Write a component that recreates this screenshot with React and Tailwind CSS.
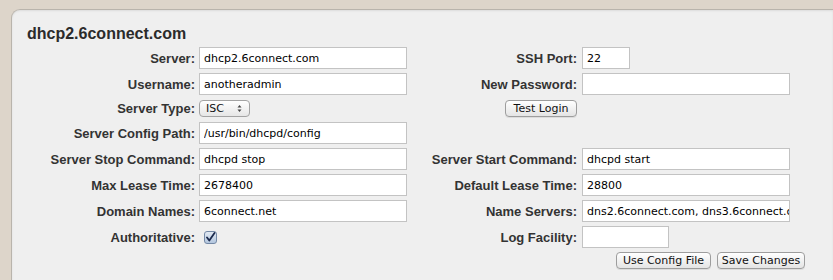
import React from "react"

const labelCls =
  "text-right text-[13px] font-bold text-[#333] leading-none font-['Liberation_Sans',Arial,sans-serif] whitespace-nowrap"
const inputCls =
  "h-[22px] border border-[#c3c3c3] bg-white pl-[4px] text-[11px] text-black font-['DejaVu_Sans',Verdana,sans-serif] outline-none"
const btnCls =
  "h-[17px] rounded-[4px] border border-[#9d9d9d] bg-gradient-to-b from-white to-[#e4e4e4] text-[11px] font-normal leading-none text-[#111] font-['DejaVu_Sans',Verdana,sans-serif] shadow-[0_1px_0_rgba(0,0,0,0.08)]"

function Field({ value, w = "w-[208px]" }) {
  return <input type="text" readOnly value={value} className={`${inputCls} ${w}`} />
}

function Row({ h = "h-[22px]", leftLabel, left, rightLabel, right }) {
  return (
    <div className={`flex items-center ${h}`}>
      <div className={`w-[168px] ${labelCls}`}>{leftLabel}</div>
      <div className="ml-[4px] flex w-[208px] items-center">{left}</div>
      <div className={`w-[170px] ${labelCls}`}>{rightLabel}</div>
      <div className="ml-[5px] flex items-center">{right}</div>
    </div>
  )
}

function Checkbox() {
  return (
    <div className="ml-[5px] flex h-[13px] w-[13px] items-center justify-center rounded-[3px] border border-[#7489a6] bg-gradient-to-b from-[#e2e9f2] to-[#b3c6de]">
      <svg width="11" height="11" viewBox="0 0 11 11">
        <path d="M2 5.5 L4.3 8.5 L9.5 1" fill="none" stroke="#1c2a4d" strokeWidth="1.8" strokeLinecap="round" strokeLinejoin="round" />
      </svg>
    </div>
  )
}

function Select() {
  return (
    <div className="flex h-[17px] w-[51px] items-center justify-between rounded-[4px] border border-[#a3a3a3] bg-gradient-to-b from-white to-[#e6e6e6] pl-[6px] pr-[7px] text-[11px] leading-none text-[#111] font-['DejaVu_Sans',Verdana,sans-serif]">
      <span>ISC</span>
      <svg width="5" height="9" viewBox="0 0 5 9">
        <path d="M0.5 3.5 L2.5 1 L4.5 3.5 Z" fill="#444" />
        <path d="M0.5 5.5 L2.5 8 L4.5 5.5 Z" fill="#444" />
      </svg>
    </div>
  )
}

export default function App() {
  return (
    <div className="h-[280px] overflow-hidden bg-[#ddd5ca] pl-[11px] pt-[9px]">
      <div className="h-[300px] rounded-tl-[9px] border-l border-t border-[#b9b4ac] bg-[#efefef] pl-[15px] pt-[14px] shadow-[inset_0_1px_2px_rgba(0,0,0,0.08)]">
        <h1 className="h-[20px] text-[16px] font-bold leading-[20px] text-[#2b2b2b] font-['Liberation_Sans',Arial,sans-serif]">
          dhcp2.6connect.com
        </h1>

        <div className="mt-[3px] flex flex-col gap-[4px]">
          <Row
            leftLabel="Server:"
            left={<Field value="dhcp2.6connect.com" />}
            rightLabel="SSH Port:"
            right={<Field value="22" w="w-[48px]" />}
          />
          <Row
            leftLabel="Username:"
            left={<Field value="anotheradmin" />}
            rightLabel="New Password:"
            right={<Field value="" />}
          />
          <Row
            h="h-[19px]"
            leftLabel="Server Type:"
            left={<Select />}
            rightLabel={
              <div className="flex justify-end">
                <button className={`${btnCls} w-[72px]`}>Test Login</button>
              </div>
            }
            right={null}
          />
          <Row
            leftLabel="Server Config Path:"
            left={<Field value="/usr/bin/dhcpd/config" />}
            rightLabel=""
            right={null}
          />
          <Row
            leftLabel="Server Stop Command:"
            left={<Field value="dhcpd stop" />}
            rightLabel="Server Start Command:"
            right={<Field value="dhcpd start" />}
          />
          <Row
            leftLabel="Max Lease Time:"
            left={<Field value="2678400" />}
            rightLabel="Default Lease Time:"
            right={<Field value="28800" />}
          />
          <Row
            leftLabel="Domain Names:"
            left={<Field value="6connect.net" />}
            rightLabel="Name Servers:"
            right={<Field value="dns2.6connect.com, dns3.6connect.com" />}
          />
          <Row
            leftLabel="Authoritative:"
            left={<Checkbox />}
            rightLabel="Log Facility:"
            right={<Field value="" w="w-[87px]" />}
          />
          <div className="flex h-[17px] items-center pl-[589px]">
            <button className={`${btnCls} w-[95px]`}>Use Config File</button>
            <button className={`${btnCls} ml-[6px] w-[88px]`}>Save Changes</button>
          </div>
        </div>
      </div>
    </div>
  )
}
